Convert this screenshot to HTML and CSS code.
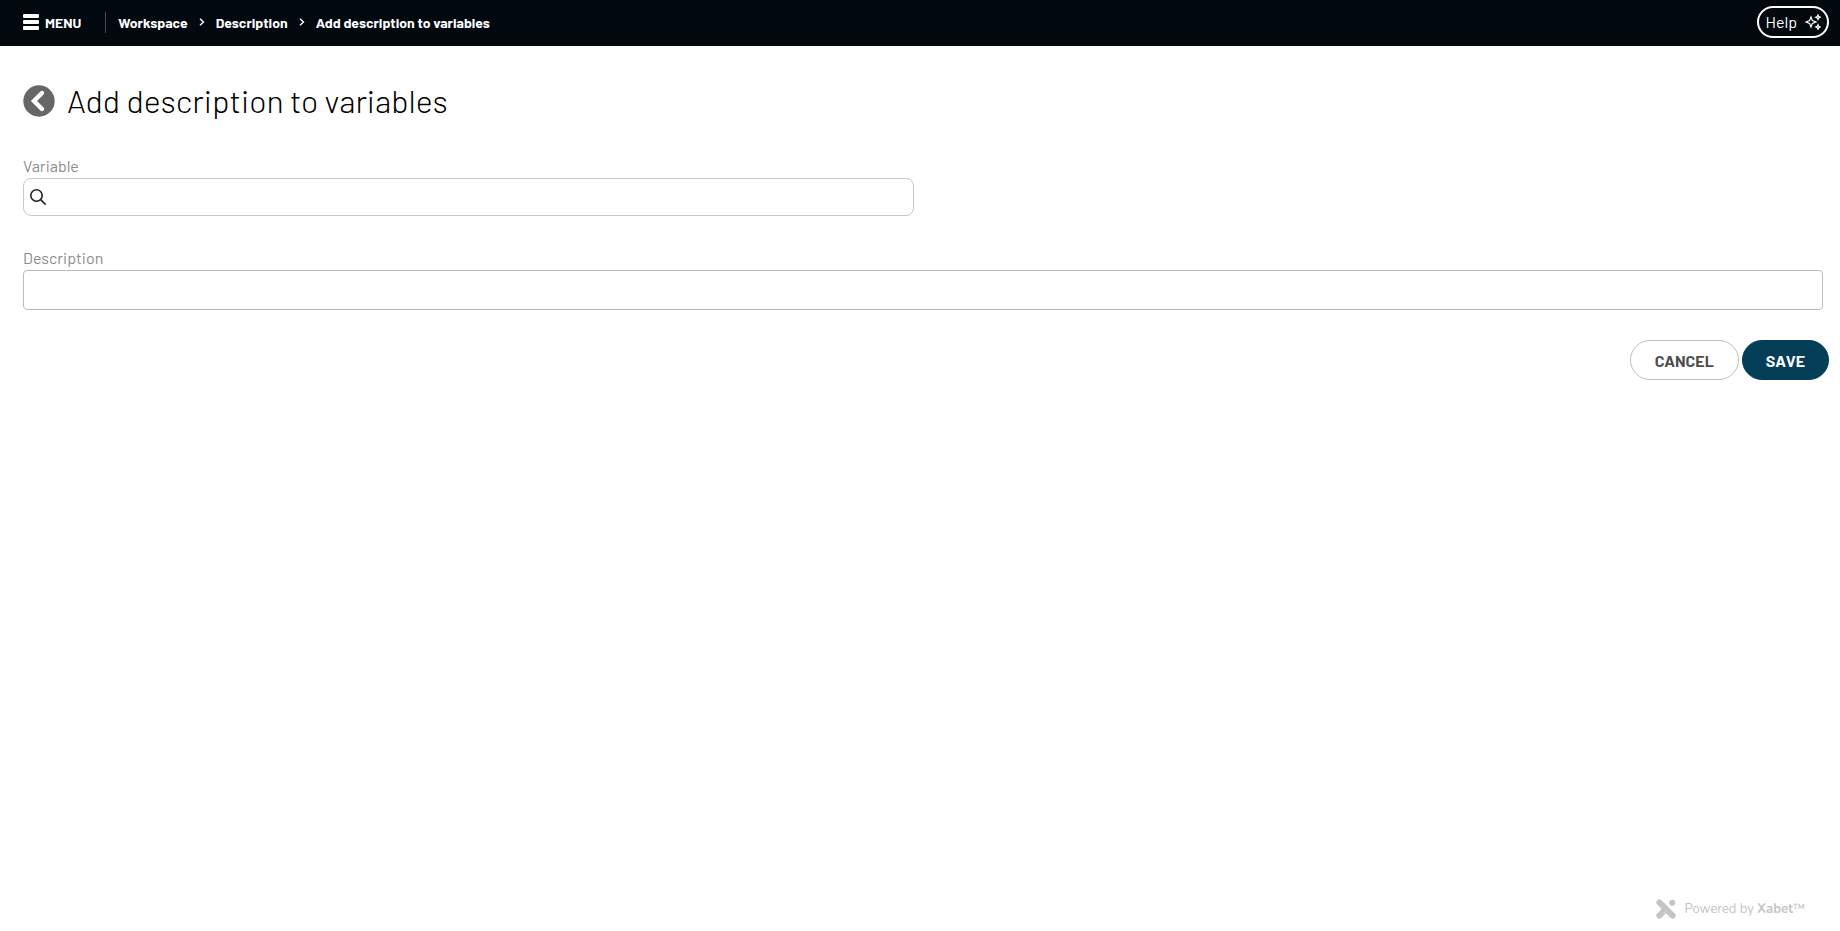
FILE: index.html
```html
<!DOCTYPE html>
<html lang="en">
<head>
<meta charset="utf-8">
<meta name="viewport" content="width=device-width, initial-scale=1">
<title>Add description to variables</title>
<link rel="stylesheet" href="styles.css">
</head>
<body>
<header class="topbar">
  <button class="menu" type="button">
    <svg width="16" height="16" viewBox="0 0 16 16" fill="currentColor" aria-hidden="true"><rect width="16" height="4" rx="1"/><rect y="6" width="16" height="4" rx="1"/><rect y="12" width="16" height="4" rx="1"/></svg>
    <span>MENU</span>
  </button>
  <nav class="crumbs" aria-label="Breadcrumb">
    <a href="#">Workspace</a>
    <svg class="sep" width="6" height="8" viewBox="0 0 6 8" aria-hidden="true"><path d="M1 .7 4.5 4 1 7.3"/></svg>
    <a href="#">Description</a>
    <svg class="sep" width="6" height="8" viewBox="0 0 6 8" aria-hidden="true"><path d="M1 .7 4.5 4 1 7.3"/></svg>
    <a href="#" aria-current="page">Add description to variables</a>
  </nav>
  <button class="help" type="button">
    <span>Help</span>
    <svg width="16" height="16" viewBox="0 0 16 16" aria-hidden="true"><path d="M6 3 7.4 6.6 11 8 7.4 9.4 6 13 4.6 9.4 1 8 4.6 6.6Z"/><path d="M13 .9 13.7 2.5 15.3 3.2 13.7 3.9 13 5.5 12.3 3.9 10.7 3.2 12.3 2.5Z"/><path d="M13 10.7 13.7 12.3 15.3 13 13.7 13.7 13 15.3 12.3 13.7 10.7 13 12.3 12.3Z"/></svg>
  </button>
</header>
<main class="content">
  <div class="heading">
    <a class="back" href="#" aria-label="Back">
      <svg width="32" height="32" viewBox="0 0 32 32" aria-hidden="true"><circle cx="16" cy="16" r="15.7" fill="#666"/><path d="M19 8 11 16l8 8" fill="none" stroke="#fff" stroke-width="4.4" stroke-linecap="round"/></svg>
    </a>
    <h1>Add description to variables</h1>
  </div>
  <form class="form">
    <div class="field">
      <label for="variable">Variable</label>
      <div class="search">
        <svg width="16" height="16" viewBox="0 0 16 16" aria-hidden="true"><circle cx="6.5" cy="6.5" r="5.7"/><path d="m10.6 10.6 5 5"/></svg>
        <input id="variable" type="text">
      </div>
    </div>
    <div class="field">
      <label for="description">Description</label>
      <input class="description" id="description" type="text">
    </div>
    <div class="actions">
      <button class="btn cancel" type="button">CANCEL</button>
      <button class="btn save" type="submit">SAVE</button>
    </div>
  </form>
</main>
<footer class="footer">
  <svg width="20" height="20" viewBox="0 0 20 20" aria-hidden="true"><g stroke="#c4c4c4" stroke-width="6" stroke-linecap="round"><path d="M3.4 3.4 16.6 16.6M3.4 16.6 8.6 11.4M16.2 3.8h.01"/></g><path d="m7.8 14.4 3.2-3.2" stroke="#fff" stroke-width=".5"/></svg>
  <p>Powered by <strong>Xabet</strong>™</p>
</footer>
</body>
</html>
```
FILE: styles.css
```css
* { box-sizing: border-box; }

body {
  display: flex;
  flex-direction: column;
  min-height: 100vh;
  margin: 0;
  background: #fff;
  color: #000;
  font-family: Barlow, Roboto, sans-serif;
  font-size: 16px;
}

button, input { font: inherit; }
a { color: inherit; text-decoration: none; }
svg { flex: none; }

.topbar {
  display: flex;
  align-items: center;
  height: 46px;
  padding: 0 11px 2px 23px;
  background: #01090f;
  color: #fff;
  font-size: 14px;
  font-weight: 700;
}

.menu {
  display: flex;
  align-items: center;
  gap: 6px;
  padding: 0;
  border: 0;
  background: none;
  color: inherit;
}

.crumbs {
  display: flex;
  align-items: center;
  height: 21px;
  margin-left: 24px;
  padding-left: 12px;
  border-left: 1px solid #484c4f;
}

.sep {
  margin: 0 11px;
  fill: none;
  stroke: #fff;
  stroke-width: 1.4;
}

.help {
  display: flex;
  align-items: center;
  gap: 8px;
  height: 32px;
  margin-left: auto;
  padding: 0 6px;
  border: 2px solid #fff;
  border-radius: 16px;
  background: none;
  color: #fff;
  font-size: 16px;
  font-weight: 400;
  line-height: 18px;
}

.help svg { fill: none; stroke: #fff; stroke-width: 1.2; }

.content { padding: 35px 11px 0 23px; }

.heading {
  display: flex;
  gap: 12px;
  height: 40px;
}

.back { display: flex; padding-top: 4px; }

h1 {
  margin: 0;
  font-size: 32px;
  font-weight: 300;
  line-height: 38px;
}

.form { padding-top: 35px; }

.field { margin: 0 6px 32px 0; }

.field label {
  display: block;
  height: 22px;
  color: #8c8c8c;
  line-height: 20px;
}

.search {
  display: flex;
  align-items: center;
  width: 49.5%;
  height: 38px;
  padding-left: 6px;
  border: 1px solid #c8c8c8;
  border-radius: 8px;
}

.search svg { fill: none; stroke: #222; stroke-width: 1.6; }

.search input {
  flex: 1;
  height: 36px;
  border: 0;
  outline: 0;
  background: none;
}

.description {
  display: block;
  width: 100%;
  height: 40px;
  padding: 0 8px;
  border: 1px solid #bbb;
  border-radius: 4px;
}

.actions {
  display: flex;
  justify-content: flex-end;
  gap: 3px;
  margin-top: -2px;
}

.btn {
  height: 40px;
  padding: 1px 23px 0;
  border: 1px solid #c0c0c0;
  border-radius: 20px;
  background: #fff;
  color: #4d4d4d;
  font-weight: 700;
}

.cancel { padding: 1px 24px 0; }

.save {
  border-color: #053e57;
  background: #053e57;
  color: #fff;
}

.footer {
  display: flex;
  align-items: center;
  justify-content: flex-end;
  gap: 9px;
  margin-top: auto;
  padding: 0 35px 12px 0;
  color: #c4c4c4;
  font-family: Nunito, "Open Sans", sans-serif;
  font-size: 13px;
}

.footer p { margin: 0; }
.footer strong { font-weight: 700; }
```
